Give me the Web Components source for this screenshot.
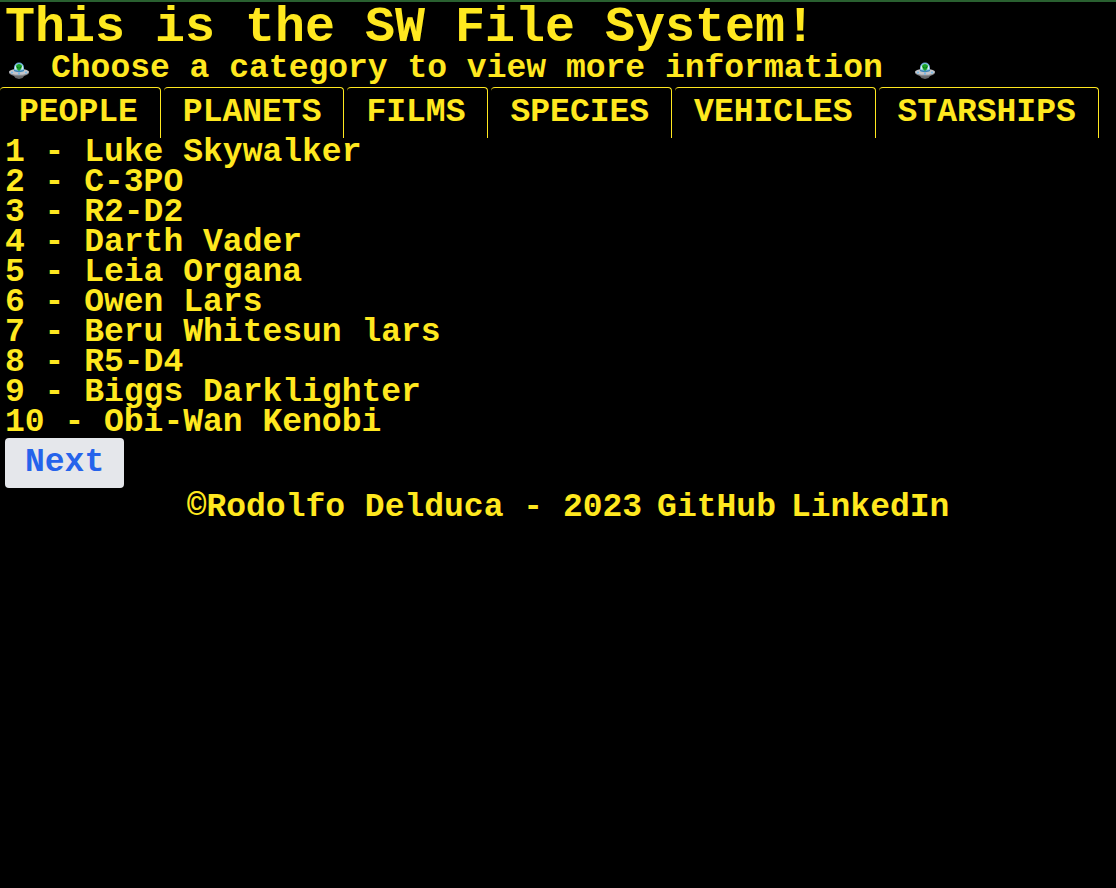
<!DOCTYPE html>
<html lang="en">
<head>
<meta charset="utf-8">
<title>SW File System</title>
<style>
  body {
    margin: 0;
    background: #000;
    color: #ffe81f;
    font: bold 33px/30px "Liberation Mono", monospace;
  }
</style>
</head>
<body>
<sw-app></sw-app>

<template id="app">
  <style>
    :host { display: block; border-top: 2px solid #296030; }
  </style>
  <sw-header></sw-header>
  <main>
    <sw-tabs></sw-tabs>
    <sw-list></sw-list>
  </main>
  <sw-footer></sw-footer>
</template>

<template id="header">
  <style>
    :host { display: block; padding: 0 5px; }
    h1 { margin: 0; font-size: 50px; line-height: 52px; white-space: nowrap; }
    p { display: flex; gap: 20px; margin: 0; padding-bottom: 3px; white-space: nowrap; }
    span { min-width: 840px; }
  </style>
  <h1>This is the SW File System!</h1>
  <p><sw-saucer></sw-saucer><span>Choose a category to view more information</span><sw-saucer></sw-saucer></p>
</template>

<template id="saucer">
  <style>
    :host { display: flex; align-items: center; }
    svg { display: block; width: 26px; height: 26px; }
  </style>
  <svg viewBox="0 0 26 26" aria-hidden="true">
    <path d="M8 19h12l-2.500 3-3.500 1-3.500-1z" fill="#68696b"/>
    <ellipse cx="14" cy="16.800" rx="10" ry="3.400" fill="#85878b"/>
    <ellipse cx="14" cy="15.800" rx="10" ry="3" fill="#c4c5ca"/>
    <path d="M9 15V11.500a5 5 0 0 1 10 0V15q-5 2.500-10 0z" fill="#65a9d6"/>
    <path d="M9.700 12a4.300 4.300 0 0 1 8.600 0v1.500h-8.600z" fill="#d8f1f4"/>
    <path d="M11 10.500q0-2.500 3-2.500t3 2.500q0 2.500-3 4.500-3-2-3-4.500z" fill="#19a52c"/>
    <path d="M12 11l1.500 1M16 11l-1.500 1" stroke="#075c16"/>
    <path d="M9 14.500q5 2.500 10 0" fill="none" stroke="#397fae"/>
    <circle cx="7" cy="16.500" r="1" fill="#70b9ea"/>
    <circle cx="14" cy="17.800" r="1" fill="#70b9ea"/>
    <circle cx="21" cy="16.500" r="1" fill="#70b9ea"/>
  </svg>
</template>

<template id="tabs">
  <style>
    :host { display: block; }
    nav { display: flex; flex-wrap: wrap; gap: 3px; }
  </style>
  <nav aria-label="Categories">
    <sw-tab>PEOPLE</sw-tab>
    <sw-tab>PLANETS</sw-tab>
    <sw-tab>FILMS</sw-tab>
    <sw-tab>SPECIES</sw-tab>
    <sw-tab>VEHICLES</sw-tab>
    <sw-tab>STARSHIPS</sw-tab>
  </nav>
</template>

<template id="tab">
  <style>
    :host { display: block; }
    button {
      display: block;
      margin: 0;
      padding: 10px 22px 10px 19px;
      border: 0 solid #ffe81f;
      border-width: 1px 1px 0 0;
      border-radius: 4px 4px 0 0;
      background: #000;
      color: inherit;
      font: inherit;
      cursor: pointer;
    }
  </style>
  <button type="button"><slot></slot></button>
</template>

<template id="list">
  <style>
    :host { display: block; padding: 0 5px; }
    ul { margin: 0; padding: 0; list-style: none; }
    button {
      display: block;
      margin: 0;
      padding: 10px 20px;
      border: 0;
      border-radius: 4px;
      background: #e5e7eb;
      color: #2563eb;
      font: inherit;
      cursor: pointer;
    }
  </style>
  <ul>
    <li>1 - Luke Skywalker</li>
    <li>2 - C-3PO</li>
    <li>3 - R2-D2</li>
    <li>4 - Darth Vader</li>
    <li>5 - Leia Organa</li>
    <li>6 - Owen Lars</li>
    <li>7 - Beru Whitesun lars</li>
    <li>8 - R5-D4</li>
    <li>9 - Biggs Darklighter</li>
    <li>10 - Obi-Wan Kenobi</li>
  </ul>
  <button type="button">Next</button>
</template>

<template id="footer">
  <style>
    :host { display: block; padding: 5px 0 5px 20px; }
    footer { display: flex; justify-content: center; gap: 15px; }
    a { color: inherit; text-decoration: none; }
  </style>
  <footer>
    <span>©Rodolfo Delduca - 2023</span>
    <a href="#github">GitHub</a>
    <a href="#linkedin">LinkedIn</a>
  </footer>
</template>

<script>
  class TemplateElement extends HTMLElement {
    constructor() {
      super();
      const template = document.getElementById(this.constructor.template);
      this.attachShadow({ mode: "open" }).append(template.content.cloneNode(true));
    }
  }
  for (const name of ["saucer", "tab", "tabs", "header", "list", "footer", "app"]) {
    customElements.define("sw-" + name, class extends TemplateElement {
      static template = name;
    });
  }
</script>
</body>
</html>
